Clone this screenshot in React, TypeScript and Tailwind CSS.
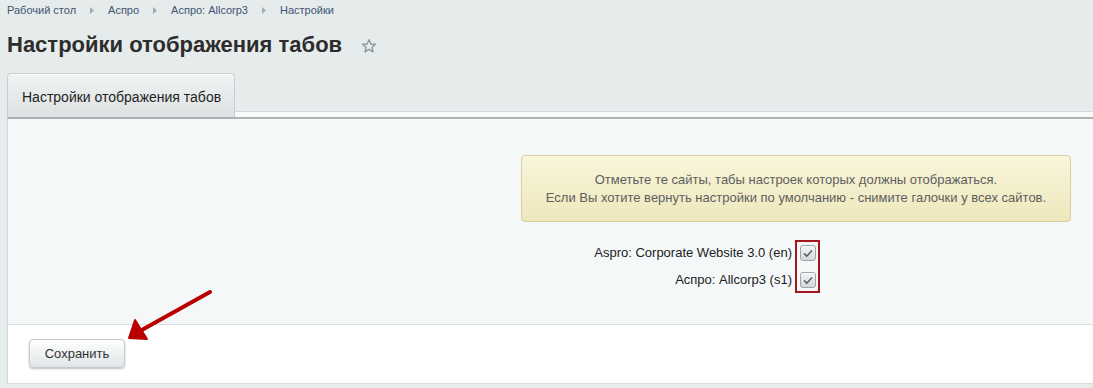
import React from "react";

const Sep = () => (
  <svg width="4" height="7" viewBox="0 0 4 7" className="shrink-0">
    <path d="M0 0 L4 3.5 L0 7 Z" fill="#a3acb1" />
  </svg>
);

const Check = () => (
  <div className="w-[16px] h-[16px] rounded-[3px] border border-[#9ea4a8] bg-gradient-to-b from-[#f4f5f5] to-[#d3d8da] flex items-center justify-center shadow-[inset_0_1px_0_#fff]">
    <svg width="10" height="9" viewBox="0 0 10 9">
      <path d="M1 4.5 L3.8 7.2 L9 1.5" stroke="#5a5f63" strokeWidth="1.6" fill="none" />
    </svg>
  </div>
);

export default function App() {
  return (
    <div
      className="relative h-[388px] w-[1093px] overflow-hidden bg-[#e6ebec] pl-[7px]"
      style={{ fontFamily: '"Liberation Sans", Arial, sans-serif' }}
    >
      {/* breadcrumb */}
      <div className="h-[20px] flex items-center gap-[14px] text-[11px] text-[#3f5573]">
        <span>Рабочий стол</span>
        <Sep />
        <span>Аспро</span>
        <Sep />
        <span>Аспро: Allcorp3</span>
        <Sep />
        <span>Настройки</span>
      </div>
      {/* title */}
      <div className="h-[53px] pt-[13px] flex items-start gap-[19px]">
        <h1 className="text-[22px] leading-[24px] font-bold text-[#2d2d2d]">
          Настройки отображения табов
        </h1>
        <svg width="16" height="16" viewBox="0 0 24 24" className="mt-[5px]">
          <path
            d="M12 2.5 L14.8 9 L21.8 9.4 L16.4 13.9 L18.1 20.8 L12 17 L5.9 20.8 L7.6 13.9 L2.2 9.4 L9.2 9 Z"
            fill="none"
            stroke="#8b969b"
            strokeWidth="2"
            strokeLinejoin="round"
          />
        </svg>
      </div>
      {/* tabs */}
      <div className="h-[44px] flex">
        <div className="w-[228px] h-[44px] rounded-t-[4px] border border-b-0 border-[#c8cecf] bg-gradient-to-b from-[#f1f3f3] to-[#dde2e3] pl-[14px] pt-[15px] text-[14px] leading-[16px] text-[#1f1f1f] shadow-[inset_0_1px_0_#fff]">
          Настройки отображения табов
        </div>
        <div className="flex-1 self-end h-[6px] bg-[#f9fbfb] border-t border-[#d3d9da]" />
      </div>
      {/* panel */}
      <div className="border-t-2 border-l border-[#aab2b4] border-l-[#d2d8d9]">
        <div className="bg-[#f5f8f8] pt-[36px] pb-[31px] pr-[22px] flex flex-col items-end">
          <div className="w-[550px] h-[67px] rounded-[4px] border border-[#d8cf9f] bg-gradient-to-b from-[#f8f5da] to-[#efe8bd] flex flex-col items-center justify-center text-[13px] leading-[18px] text-[#5e5e5e]">
            <div>Отметьте те сайты, табы настроек которых должны отображаться.</div>
            <div>Если Вы хотите вернуть настройки по умолчанию - снимите галочки у всех сайтов.</div>
          </div>
          <div className="mt-[18px] mr-[251px] flex gap-[3px] text-[13px] text-[#222]">
            <div className="flex flex-col items-end pt-[5px] gap-[11px]">
              <div className="h-[16px] leading-[16px]">Aspro: Corporate Website 3.0 (en)</div>
              <div className="h-[16px] leading-[16px]">Аспро: Allcorp3 (s1)</div>
            </div>
            <div className="border-2 border-[#a3161c] pt-[3px] pb-[3px] pl-[3px] pr-[2px] flex flex-col gap-[11px]">
              <Check />
              <Check />
            </div>
          </div>
        </div>
        <div className="bg-white border-t border-b border-[#d6dde0] pt-[14px] pb-[15px] pl-[21px]">
          <button className="w-[96px] h-[29px] rounded-[4px] border border-[#c3cacc] bg-gradient-to-b from-[#ffffff] to-[#dfe5e6] shadow-[0_1px_2px_rgba(0,0,0,0.25)] text-[13px] text-[#333]">
            Сохранить
          </button>
        </div>
      </div>
      {/* red arrow annotation */}
      <svg
        className="absolute left-0 top-0 pointer-events-none"
        width="1093"
        height="388"
        viewBox="0 0 1093 388"
      >
        <line x1="210" y1="292" x2="140" y2="331" stroke="#b90000" strokeWidth="4" strokeLinecap="round" />
        <path d="M129 338 L135 320 L147 339 Z" fill="#b90000" stroke="#b90000" strokeWidth="2" strokeLinejoin="round" />
      </svg>
    </div>
  );
}
